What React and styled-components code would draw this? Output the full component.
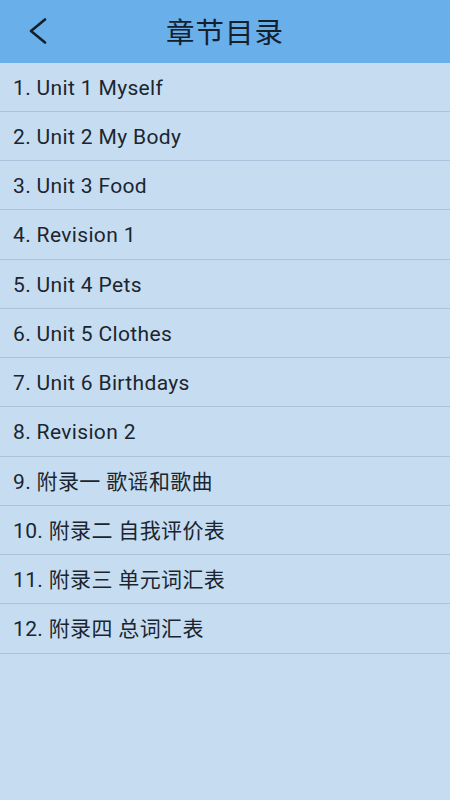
import React from "react";
import styled, { createGlobalStyle } from "styled-components";

const Global = createGlobalStyle`
  html, body { margin: 0; padding: 0; }
  body {
    width: 450px;
    height: 800px;
    background: #c6ddf1;
    font-family: Roboto, "Noto Sans CJK SC", sans-serif;
    overflow: hidden;
  }
`;

const Page = styled.div`
  width: 450px;
  height: 800px;
  display: flex;
  flex-direction: column;
  background: #c6ddf1;
`;

const Header = styled.header`
  height: 62.5px;
  flex: none;
  background: #69afe9;
  display: grid;
  grid-template-columns: 62px 1fr 62px;
  align-items: center;
`;

const Back = styled.button`
  border: 0;
  background: transparent;
  padding: 0 0 0 28px;
  height: 62px;
  display: flex;
  align-items: center;
  cursor: pointer;
`;

const Title = styled.h1`
  margin: 0;
  text-align: center;
  font-family: "Noto Sans CJK SC", sans-serif;
  font-weight: 400;
  font-size: 28.5px;
  line-height: 40px;
  letter-spacing: 1px;
  color: #14202c;
`;

const List = styled.ul`
  list-style: none;
  margin: 0;
  padding: 0;
`;

const Row = styled.li`
  box-sizing: content-box;
  height: 46.25px;
  padding: 2px 0 0 13px;
  border-bottom: 1px solid #a8c3db;
  display: flex;
  align-items: center;
  font-size: 21px;
  line-height: 24px;
  letter-spacing: 0.35px;
  color: #1b2530;
  font-family: Roboto, "Noto Sans CJK SC", sans-serif;
`;

const items = [
  "1. Unit 1 Myself",
  "2. Unit 2 My Body",
  "3. Unit 3 Food",
  "4. Revision 1",
  "5. Unit 4 Pets",
  "6. Unit 5 Clothes",
  "7. Unit 6 Birthdays",
  "8. Revision 2",
  "9. 附录一 歌谣和歌曲",
  "10. 附录二 自我评价表",
  "11. 附录三 单元词汇表",
  "12. 附录四 总词汇表",
];

export default function App() {
  return (
    <Page>
      <Global />
      <Header>
        <Back aria-label="back">
          <svg width="20" height="26" viewBox="0 0 20 26">
            <path d="M17 1.5 L3 13 L17 24.5" fill="none" stroke="#14202c" strokeWidth="2.6" strokeLinecap="round" strokeLinejoin="round" />
          </svg>
        </Back>
        <Title>章节目录</Title>
        <div />
      </Header>
      <List>
        {items.map((t) => (
          <Row key={t}>{t}</Row>
        ))}
      </List>
    </Page>
  );
}
